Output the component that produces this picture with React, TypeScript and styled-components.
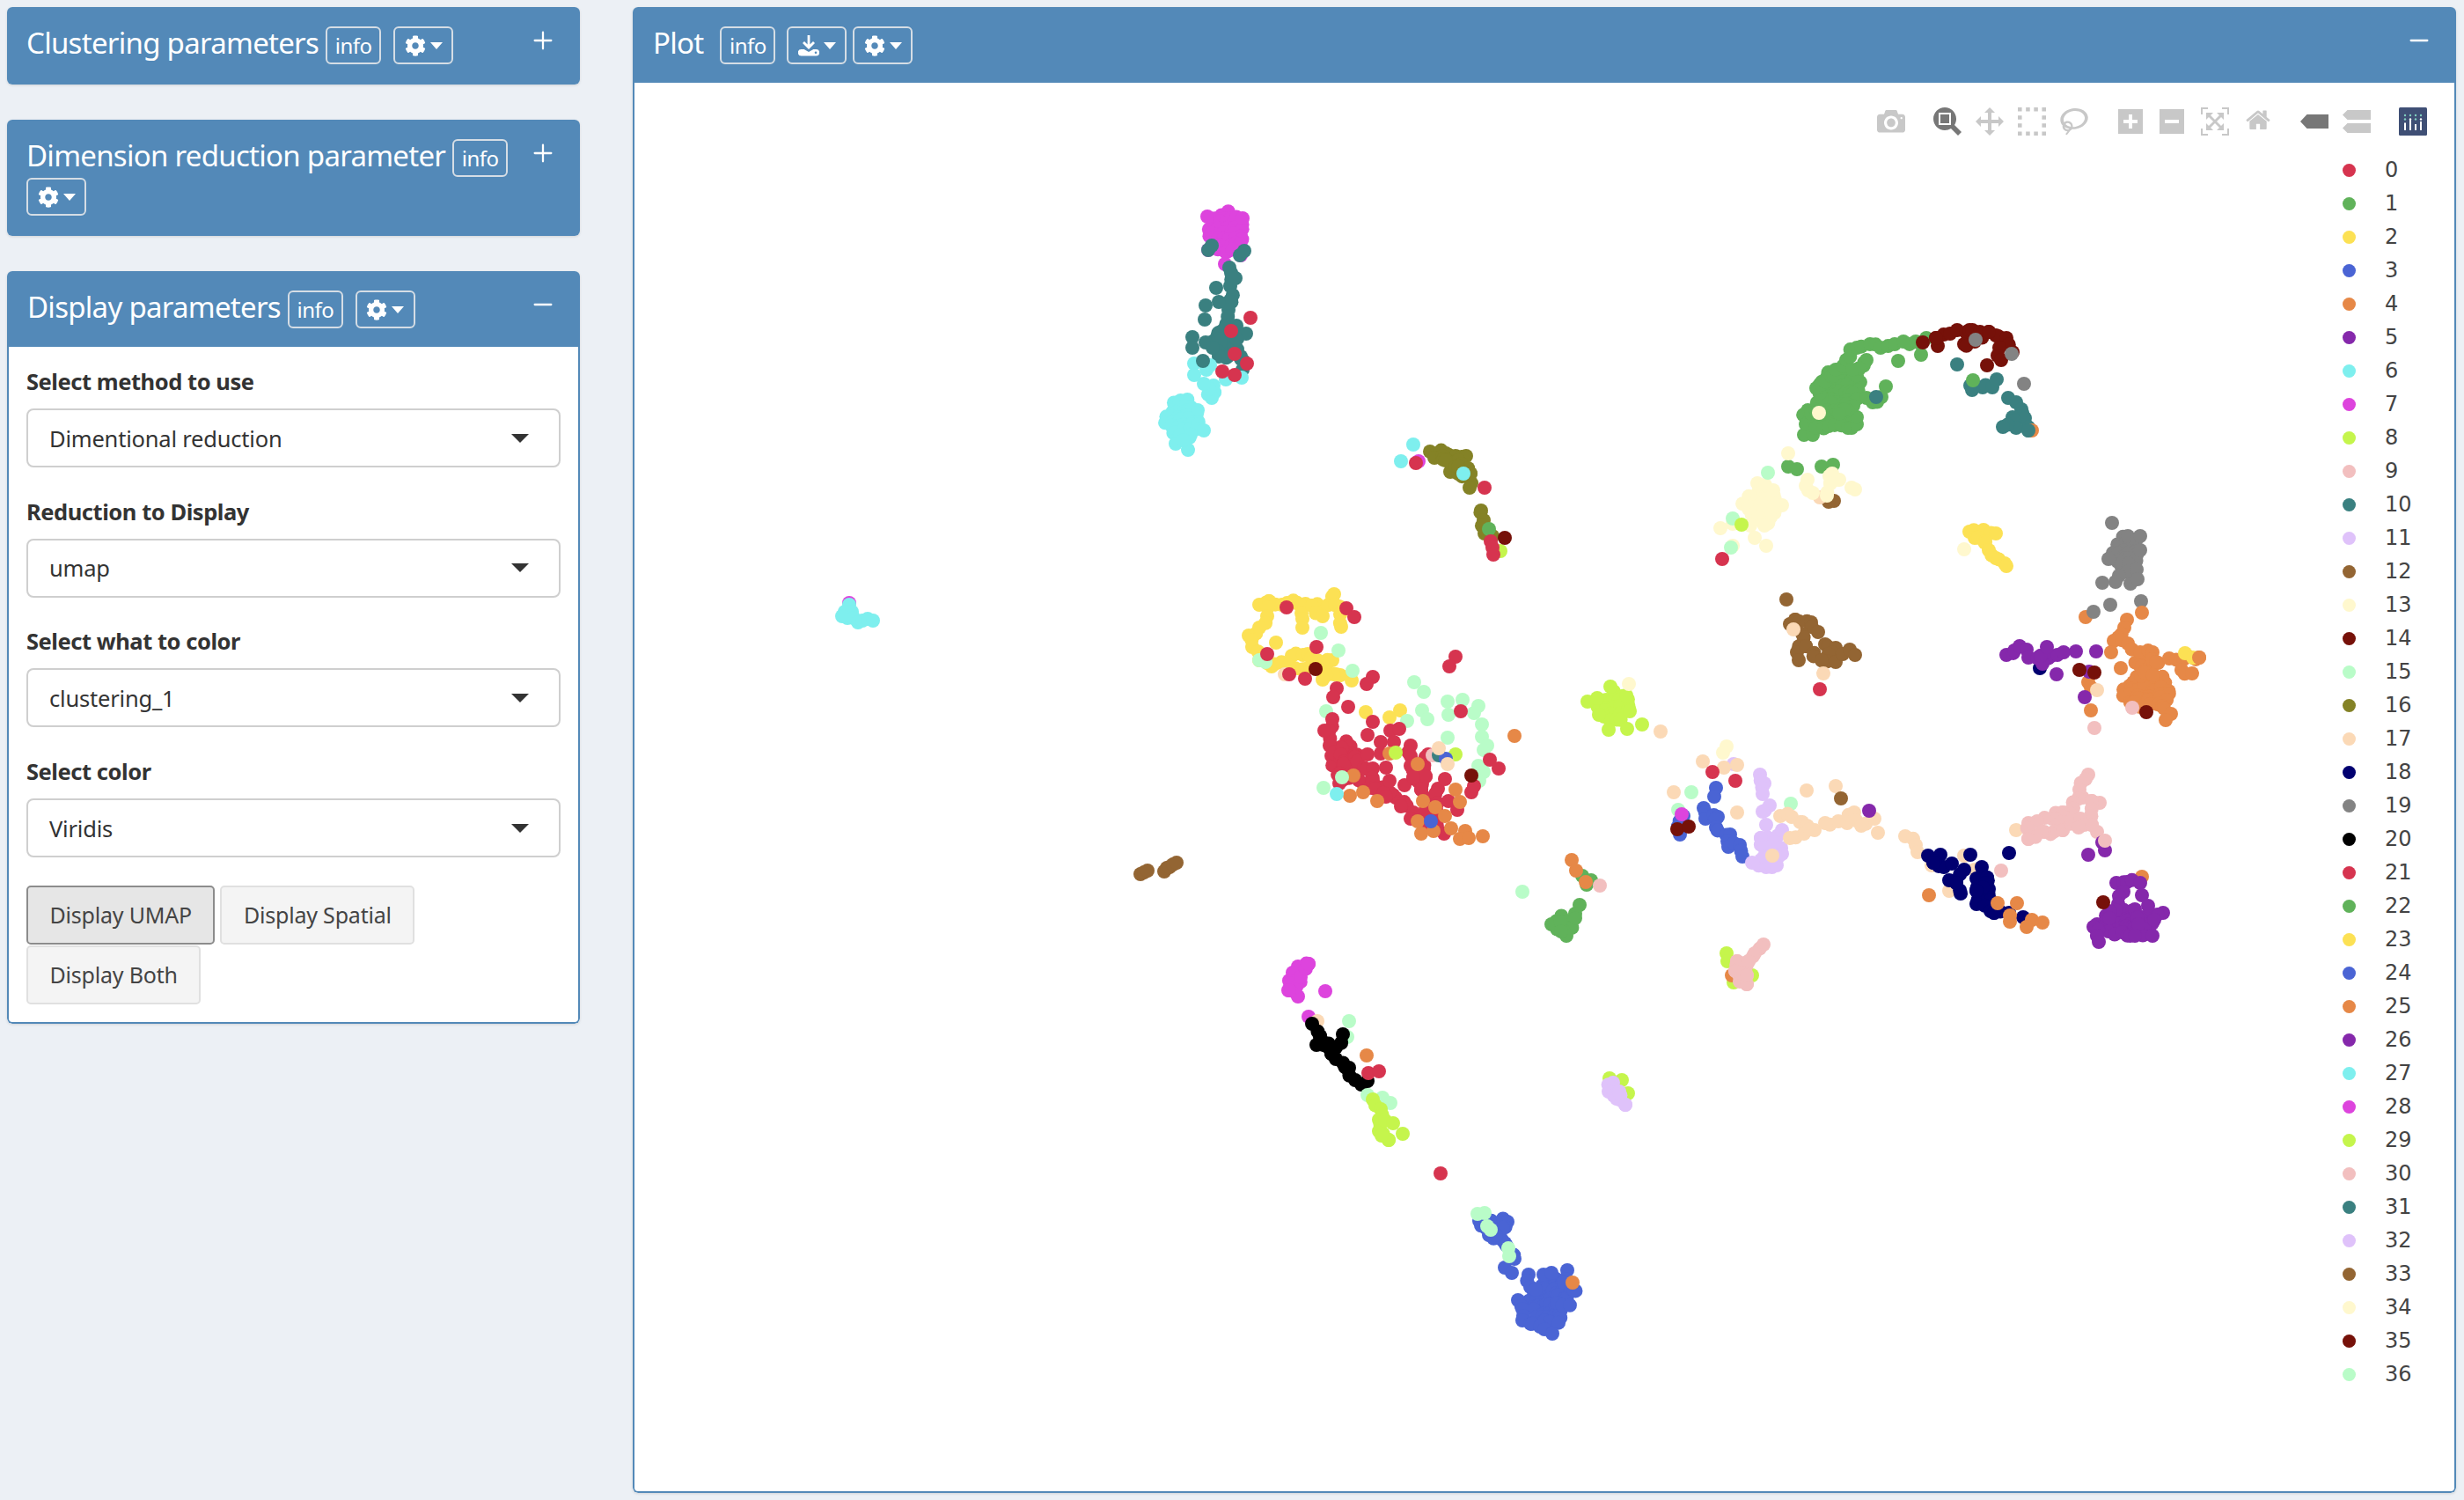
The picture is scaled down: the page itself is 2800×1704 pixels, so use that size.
import React from "react";
import styled, { createGlobalStyle } from "styled-components";
import { Plus, Minus } from "lucide-react";
import { FaCog } from "react-icons/fa";

const GlobalStyle = createGlobalStyle`
  html, body {
    margin: 0;
    background: #ecf0f5;
  }
  * {
    box-sizing: border-box;
  }
`;

const BLUE = "#5389b8";
const uiFont = `"Noto Sans", "Liberation Sans", sans-serif`;

const red = "#d6344f";
const green = "#60b25a";
const yellow = "#fce154";
const blue = "#4a64d4";
const orange = "#e68847";
const purple = "#8528ab";
const cyan = "#7eefee";
const magenta = "#dd44dd";
const lime = "#c5f54c";
const pink = "#f2bfbf";
const teal = "#3a8080";
const lavender = "#dfc2fa";
const brown = "#936533";
const cream = "#fff8ce";
const maroon = "#761109";
const mint = "#b9fcc8";
const olive = "#848226";
const peach = "#fbd9b6";
const navy = "#010070";
const gray = "#838383";
const black = "#000000";

const palette = [
  red, green, yellow, blue, orange, purple, cyan, magenta, lime, pink, teal,
  lavender, brown, cream, maroon, mint, olive, peach, navy, gray, black,
];
const legendItems = Array.from({ length: 37 }, (_, i) => ({
  name: String(i),
  color: i <= 20 ? palette[i] : palette[(i - 21) % 16],
}));

type Trace = { color: string; dots?: string; chains?: string[]; blobs?: number[][] };

// page coordinates, the svg viewBox below starts at the plot body's corner
const traces: Trace[] = [
  { color: magenta, blobs: [[1393, 265, 20, 23]], dots: "1372,246 1412,248 1373,284 1410,290 1392,300 1465,1125 1506,1126 965,685" , chains: ["1487,1095 1475,1098 1469,1105 1466,1117 1464,1125 1475,1132 1478,1110 1487,1095"] },
  { color: teal, chains: ["1397,304 1398,325 1396,352 1393,381 1395,405", "1385,385 1385,405", "1405,370 1405,400 1412,420", "1373,284 1377,279", "1409,290 1414,285", "2239,438 2241,443 2253,440 2264,440 2269,431", "2282,452 2291,457 2297,465 2301,475 2305,489", "2287,474 2291,486 2276,485"], dots: "1404,316 1382,327 1370,347 1369,363 1385,343 1355,383 1355,395 1370,389 1416,379 1405,385 1378,395 1410,405 2224,414" , blobs: [[1393, 388, 14, 18]] },
  { color: cyan, blobs: [[1345, 477, 20, 23]], chains: ["1379,438 1377,452 1368,436"], dots: "965,687 960,695 963,702 968,695 957,700 970,702 975,707 980,705 986,703 992,705 1357,413 1357,426 1371,420 1411,429 1393,431 1375,415 1368,489 1350,511 1336,504 1345,500" },
  { color: teal, dots: "1367,410" },
  { color: red, dots: "1421,361 1399,376 1403,402 1417,413 1389,422 1403,426" },

  { color: olive, chains: ["1625,513 1643,515 1654,518 1666,518", "1630,520 1661,527 1671,538 1670,554", "1648,536 1657,538 1671,538", "1640,522 1657,530", "1683,580 1686,591 1687,606 1696,609"] },
  { color: cyan, dots: "1663,538 1606,505 1592,524" },
  { color: magenta, dots: "1612,524" },
  { color: red, dots: "1609,526 1687,554" },
  { color: lime, dots: "1705,626" },
  { color: green, dots: "1692,601" },
  { color: red, chains: ["1694,615 1696,622 1697,630"] },
  { color: maroon, dots: "1710,611" },

  { color: yellow, chains: ["1431,687 1442,683 1474,685 1491,688 1503,690 1517,687 1516,675", "1517,687 1523,698 1524,712", "1474,685 1480,703 1480,713", "1491,688 1503,700", "1442,683 1440,700 1431,713 1419,722 1423,735 1431,750 1445,757 1465,755 1483,760 1503,753 1514,750", "1468,745 1486,743 1503,753 1508,763 1523,767 1503,772", "1536,773"], dots: "1450,730 1552,809 1579,815 1591,807" },
  { color: mint, dots: "1501,719 1521,739 1431,750 1438,752 1537,762 1607,775 1618,786 1645,797 1662,795 1680,802 1646,812 1675,810 1507,808 1616,807 1622,817 1599,819 1684,823 1645,838 1684,837 1690,847 1686,852 1680,870 1686,877 1681,887 1504,895 1525,883" },
  { color: peach, dots: "1460,766" },
  { color: red, chains: ["1514,817 1511,847 1526,867 1549,890 1583,903 1606,923 1641,947", "1525,850 1525,885", "1540,860 1560,887 1579,900", "1560,873 1560,895 1575,905", "1603,847 1603,870 1615,897 1620,920", "1620,882 1615,897", "1623,857 1620,882", "1634,896 1630,925", "1672,900 1675,893"], dots: "1462,690 1530,691 1539,701 1496,735 1440,743 1465,766 1483,771 1560,769 1553,777 1519,782 1515,792 1654,746 1647,757 1532,803 1660,808 1693,863 1703,873 1560,820 1554,835 1569,843 1580,830 1590,828 1584,843 1554,857 1569,856 1575,872 1579,887 1596,892 1606,883 1642,885 1646,910 1656,920 1592,916 1603,930 1505,830 1522,890", blobs: [[1528, 865, 16, 22]] },
  { color: maroon, dots: "1495,760 1672,881" },
  { color: orange, dots: "1721,836 1579,856 1611,868 1538,881 1549,900 1534,904 1565,910 1617,910 1654,897 1659,911 1631,917 1642,927 1611,933 1649,941 1615,947 1629,944 1665,944 1659,953 1669,952 1685,950" },
  { color: lime, dots: "1586,855 1654,857" },
  { color: pink, dots: "1628,858" },
  { color: teal, dots: "1635,858" },
  { color: blue, dots: "1643,862 1626,933" },
  { color: peach, dots: "1635,850 1645,868" },
  { color: cyan, dots: "1519,902" },
  { color: mint, dots: "1525,883 1730,1013" },

  { color: brown, dots: "1296,993 1300,991 1304,989 1323,990 1326,986 1329,985 1333,982 1337,980" },
  { color: green, blobs: [[1775, 1050, 13, 9]], dots: "1795,1028 1790,1038 1763,1050 1773,1047 1790,1043 1780,1063 1774,1058 1798,995 1808,1000 1803,1005" },
  { color: orange, dots: "1786,977 1791,989 1802,1002" },
  { color: pink, dots: "1818,1006" },

  { color: magenta, dots: "1487,1155" },
  { color: peach, dots: "1497,1160" },
  { color: mint, dots: "1533,1160 1531,1178" },
  { color: black, chains: ["1491,1163 1500,1177 1513,1197 1518,1203 1533,1213 1540,1227 1547,1232 1554,1228", "1496,1187 1518,1190 1526,1175", "1500,1177 1513,1197"] },
  { color: orange, dots: "1553,1199" },
  { color: red, dots: "1555,1219 1567,1217 1637,1333" },
  { color: mint, dots: "1554,1244 1571,1247 1580,1253" },
  { color: lime, chains: ["1560,1249 1569,1260 1567,1272 1567,1285 1578,1295", "1574,1273 1583,1276", "1578,1295 1570,1290"], dots: "1594,1288" },
  { color: lime, dots: "1829,1225 1843,1227 1850,1242" },
  { color: lavender, chains: ["1833,1230 1828,1240 1837,1248 1847,1255", "1840,1240 1847,1255"] },
  { color: blue, chains: ["1681,1387 1692,1403 1710,1412 1721,1430", "1690,1385 1713,1388 1700,1403", "1710,1440 1718,1446", "1737,1448 1739,1462 1745,1465", "1754,1448 1763,1446", "1781,1443 1777,1457 1788,1465", "1725,1477 1730,1487 1730,1500 1750,1507 1764,1515"], blobs: [[1760, 1480, 20, 26], [1776, 1470, 12, 14]] },
  { color: mint, chains: ["1679,1379 1687,1378", "1690,1393 1694,1397", "1714,1418 1715,1427"] },
  { color: orange, dots: "1787,1457" },

  { color: green, blobs: [[2090, 441, 24, 22], [2078, 472, 28, 12]], chains: ["2050,494 2060,494", "2052,482 2078,484 2100,486 2110,482 2110,474", "2058,470 2070,452 2064,441 2074,434 2086,420 2098,409 2110,395 2125,391 2137,395 2153,391 2163,388 2177,388 2189,384", "2110,427 2121,409 2105,420", "2121,452 2128,457 2138,451", "2106,461 2090,470"], dots: "2157,410 2183,403 2143,439 2242,432 2032,530 2042,533 2070,530 2083,528" },
  { color: teal, dots: "2132,451" },
  { color: cream, dots: "2067,469" },
  { color: maroon, chains: ["2200,384 2216,379 2224,375 2238,375 2250,377 2260,377 2268,381 2280,384 2287,400", "2202,393 2200,384", "2232,391 2244,388 2260,377", "2272,395 2270,404 2274,409"], dots: "2185,389 2258,415" },
  { color: gray, dots: "2245,386 2286,402 2300,436" },
  { color: orange, dots: "2309,489" },
  { color: teal, dots: "2305,489" },

  { color: brown, dots: "2084,569 2078,570" },
  { color: peach, dots: "2068,565" },
  { color: cream, blobs: [[2003, 574, 20, 18]], chains: ["1997,549 2003,552 2015,557", "2054,545 2052,552 2060,560", "2082,538 2080,549 2090,545", "2104,554 2108,556", "2080,549 2076,563"], dots: "2032,515 2025,574 1989,597 2005,597 1955,600 1969,595 1994,611 2007,620 1969,620" },
  { color: mint, dots: "2009,537 1969,589 1967,622" },
  { color: lime, dots: "1979,596" },
  { color: red, dots: "1957,635" },

  { color: cream, dots: "2232,624" },
  { color: yellow, chains: ["2238,604 2254,602 2268,606", "2244,611 2256,615 2260,625 2268,634 2278,640 2280,643"] },

  { color: gray, blobs: [[2416, 630, 13, 18]], chains: ["2418,609 2432,609", "2408,654 2404,661"], dots: "2400,594 2396,635 2432,625 2428,647 2389,662 2421,663 2429,658 2398,687 2433,683" },
  { color: orange, chains: ["2417,704 2414,713 2402,728 2418,731 2432,741 2446,741 2450,752", "2465,748 2481,749 2499,747", "2479,761 2491,765", "2373,775 2376,781"], dots: "2370,701 2434,696 2399,741 2410,759 2376,807", blobs: [[2440, 785, 26, 20], [2438, 755, 12, 14]] },
  { color: orange, chains: ["2457,802 2467,811 2461,818"] },
  { color: gray, dots: "2379,695" },
  { color: yellow, dots: "2483,742 2492,747" },
  { color: orange, dots: "2499,747" },
  { color: pink, dots: "2423,804 2380,827" },
  { color: navy, dots: "2318,759" },
  { color: purple, chains: ["2280,744 2295,734 2303,738 2305,747 2319,745 2331,745 2345,741", "2321,754 2319,745"], dots: "2326,735 2359,740 2382,740 2337,766 2374,763 2369,792" },
  { color: maroon, dots: "2439,809 2363,761 2380,764" },
  { color: peach, dots: "2383,784" },

  { color: brown, chains: ["2040,704 2034,709", "2040,704 2058,707 2066,718", "2048,720 2052,734 2042,741 2044,750", "2074,732 2086,736 2070,750 2086,752", "2052,734 2070,750", "2094,743 2102,738 2108,744"], dots: "2030,681" },
  { color: peach, dots: "2038,715 2072,765" },
  { color: red, dots: "2068,783" },

  { color: lime, blobs: [[1835, 803, 17, 17]], dots: "1804,797 1830,780 1815,793 1848,790 1852,808 1866,823 1828,829 1849,828 1817,812" },
  { color: cream, dots: "1851,777" },
  { color: peach, dots: "1887,831" },
  { color: cream, chains: ["1962,848 1958,855"] },
  { color: lavender, dots: "1970,868" },
  { color: peach, dots: "1935,865 1959,872 1974,869 1902,900 1974,923" },
  { color: red, dots: "1946,877 1972,887" },
  { color: mint, dots: "1922,900 2035,913 1907,920" },
  { color: blue, chains: ["1950,895 1948,905", "1936,918 1938,930 1952,928 1950,940 1966,948 1964,962 1977,960 1980,973", "1909,948 1913,927"] },
  { color: lavender, chains: ["2000,880 2005,890 2003,902", "2011,915 2003,922", "2001,952 2017,957 2025,943", "2017,957 2025,970 2005,973 1991,980 2007,985 2019,983", "2001,952 2005,973"], dots: "2007,937" },
  { color: magenta, dots: "1911,925" },
  { color: maroon, dots: "1906,942 1919,939" },
  { color: peach, chains: ["2023,927 2036,928 2048,934 2056,942 2062,943", "2034,952 2050,947 2056,942", "2074,935 2089,933 2099,935 2107,923 2115,938 2130,930", "2165,950 2177,960 2179,968"], dots: "2014,972 2053,898 2086,893 2134,946" },
  { color: brown, dots: "2092,907" },
  { color: purple, dots: "2124,921" },

  { color: peach, dots: "2232,972 2195,983 2215,1012 2244,988 2291,943" },
  { color: navy, chains: ["2191,972 2197,980 2209,985 2218,981", "2205,971 2197,980", "2215,1000 2223,1003 2228,1015", "2232,988 2223,1003", "2252,985 2258,997 2260,1010 2262,1023 2266,1037 2283,1037", "2246,998 2246,1012 2246,1027 2266,1037", "2258,997 2246,1012"], dots: "2239,971 2283,969 2299,1042" },
  { color: orange, dots: "2192,1017 2270,1026 2292,1026 2284,1047 2309,1045 2303,1053 2321,1048 2284,1040" },
  { color: pink, chains: ["2373,880 2370,885 2363,897 2362,907 2377,910 2386,912", "2362,907 2356,918 2344,923 2332,930 2315,933 2305,935 2305,953", "2377,910 2377,937 2383,945", "2344,923 2344,943 2323,945 2305,953", "2344,943 2364,930 2362,940 2377,937"], dots: "2274,989" },
  { color: purple, dots: "2389,957 2392,966 2373,971" },
  { color: pink, dots: "2392,955" },
  { color: orange, dots: "2434,996" },
  { color: purple, blobs: [[2415, 1050, 30, 14]], chains: ["2405,1003 2417,1002 2432,1003", "2413,1013 2407,1027 2397,1043", "2458,1037 2448,1045", "2379,1053 2385,1070", "2426,1033 2430,1050"], dots: "2434,1017 2441,1029 2426,1063 2446,1063" },
  { color: maroon, dots: "2390,1025" },
  { color: lime, chains: ["1962,1083 1963,1092"], dots: "1991,1108 1970,1116" },
  { color: orange, dots: "1968,1108" },
  { color: pink, chains: ["2004,1073 1994,1083 1987,1092 1985,1108 1985,1118", "1974,1092 1972,1103 1977,1115 1985,1118", "1974,1092 1987,1092", "1972,1103 1985,1108"] },
];

const parse = (s: string) => s.trim().split(/\s+/).map((p) => p.split(",").map(Number));

// little seeded jitter so the blobs don't come out as clean ellipses or tubes
let seed = 7;
const rnd = () => {
  seed = (seed * 16807) % 2147483647;
  return seed / 2147483647 - 0.5;
};

const tracePoints = (t: Trace) => {
  const pts: number[][] = [];
  (t.blobs || []).forEach(([x, y, rx, ry]) => {
    for (let dy = -ry; dy <= ry; dy += 6) {
      for (let dx = -rx; dx <= rx; dx += 6) {
        if ((dx * dx) / (rx * rx) + (dy * dy) / (ry * ry) <= 1.05) {
          pts.push([x + dx + rnd() * 6, y + dy + rnd() * 6]);
        }
      }
    }
  });
  (t.chains || []).forEach((c) => {
    const list = parse(c);
    list.forEach((p, i) => {
      const q = list[i + 1];
      if (!q) {
        pts.push(p);
        return;
      }
      const len = Math.hypot(q[0] - p[0], q[1] - p[1]);
      const steps = Math.max(1, Math.round(len / 7));
      for (let k = 0; k < steps; k++) {
        const wobble = k === 0 ? 0 : 7;
        pts.push([
          p[0] + ((q[0] - p[0]) * k) / steps + rnd() * wobble,
          p[1] + ((q[1] - p[1]) * k) / steps + rnd() * wobble,
        ]);
      }
    });
  });
  if (t.dots) pts.push(...parse(t.dots));
  return pts;
};

const Page = styled.div`
  display: flex;
  gap: 60px;
  height: 1704px;
  padding: 8px 9px 8px 8px;
  background: #ecf0f5;
  font-family: ${uiFont};
`;

const SideColumn = styled.div`
  display: flex;
  flex-direction: column;
  gap: 40px;
  width: 651px;
  flex: none;
`;

const Card = styled.section<{ $fill?: boolean }>`
  display: flex;
  flex-direction: column;
  border-radius: 6px;
  background: #fff;
  box-shadow: 0 1px 3px rgba(0, 0, 0, 0.12);
  overflow: hidden;
  ${(p) => p.$fill && "flex: 1; min-width: 0;"}
`;

const Header = styled.header<{ $bar?: boolean }>`
  display: flex;
  align-items: flex-start;
  justify-content: space-between;
  padding: ${(p) => (p.$bar ? "22px 26px 20px 23px" : "22px 26px 22px 22px")};
  background: ${BLUE};
  color: #fff;
`;

const HeaderMain = styled.div`
  display: flex;
  flex-wrap: wrap;
  align-items: center;
  flex: 1;
  min-width: 0;
  max-width: 570px;
`;

const PlotHeaderMain = styled(HeaderMain)`
  max-width: none;
`;

const Title = styled.h3`
  margin: -6px 8px 0 0;
  font-size: 33px;
  font-weight: 400;
  letter-spacing: -0.72px;
  line-height: 44px;
  white-space: nowrap;
`;

const PlotTitle = styled(Title)`
  margin-right: 19px;
`;

const HeaderButton = styled.button<{ $gap?: number }>`
  display: inline-flex;
  align-items: center;
  justify-content: center;
  gap: 5px;
  height: 43px;
  margin: 0 ${(p) => p.$gap ?? 0}px 1px 0;
  padding: 0;
  border: 2px solid rgba(236, 236, 236, 0.85);
  border-radius: 6px;
  background: transparent;
  color: #fff;
  font-family: ${uiFont};
  font-size: 24px;
  letter-spacing: -0.5px;
`;

const InfoButton = styled(HeaderButton)`
  width: 63px;
`;

const MenuButton = styled(HeaderButton)`
  width: 68px;
`;

const Caret = styled.span<{ $dark?: boolean; $wide?: boolean }>`
  display: inline-block;
  width: 0;
  height: 0;
  border-left: ${(p) => (p.$wide ? 10 : 7.5)}px solid transparent;
  border-right: ${(p) => (p.$wide ? 10 : 7.5)}px solid transparent;
  border-top: ${(p) => (p.$wide ? 10 : 8)}px solid ${(p) => (p.$dark ? "#333" : "#fff")};
`;

const CollapseIcon = styled.span`
  display: flex;
  flex: none;
  width: 32px;
  height: 32px;
  color: #fff;
`;

const FormBody = styled.div`
  padding: 21px 20px 20px 20px;
  border: solid ${BLUE};
  border-width: 0 2px 2px;
  border-radius: 0 0 6px 6px;
`;

const Field = styled.div`
  margin-bottom: 31.7px;
`;

const FieldLabel = styled.label`
  display: block;
  height: 36px;
  margin-bottom: 13px;
  color: #333;
  font-size: 25.5px;
  font-weight: 700;
  letter-spacing: -0.45px;
  line-height: 36px;
`;

const SelectBox = styled.div`
  display: flex;
  align-items: center;
  justify-content: space-between;
  height: 67px;
  padding: 0 34px 0 24px;
  border: 2px solid #cfcfcf;
  border-radius: 8px;
  background: #fff;
  color: #333;
  font-size: 25.5px;
  letter-spacing: -0.2px;
`;

const ButtonRow = styled.div`
  display: flex;
  flex-wrap: wrap;
  gap: 1px 6px;
`;

const ActionButton = styled.button<{ $active?: boolean }>`
  height: 67px;
  padding: 0 24.5px;
  border: 2px solid ${(p) => (p.$active ? "#8c8c8c" : "#e0e0e0")};
  border-radius: 5px;
  background: ${(p) => (p.$active ? "#e6e6e6" : "#f4f4f4")};
  color: #444;
  font-family: ${uiFont};
  font-size: 25px;
  letter-spacing: -0.2px;
`;

const PlotArea = styled.div`
  position: relative;
  flex: 1;
  border: solid ${BLUE};
  border-width: 0 2px 2px;
  border-radius: 0 0 6px 6px;
  background: #fff;
`;

const ScatterSvg = styled.svg`
  display: block;
  width: 100%;
  height: 100%;
`;

const ModeBar = styled.div`
  position: absolute;
  top: 28px;
  right: 31px;
  display: flex;
  align-items: center;
`;

const ModeGroup = styled.div<{ $gap: number; $inner?: number }>`
  display: flex;
  align-items: center;
  gap: ${(p) => p.$inner ?? 16}px;
  margin-right: ${(p) => p.$gap}px;
`;

const ModeIcon = styled.svg<{ $w: number; $h: number; $on?: boolean }>`
  display: block;
  width: ${(p) => p.$w}px;
  height: ${(p) => p.$h}px;
  fill: ${(p) => (p.$on ? "#777" : "#c8c8c8")};
`;

const Legend = styled.ul`
  position: absolute;
  top: 80px;
  left: 1941px;
  display: flex;
  flex-direction: column;
  margin: 0;
  padding: 0;
  list-style: none;
`;

const LegendRow = styled.li`
  display: flex;
  align-items: center;
  height: 38px;
  color: #444;
  font-family: "DejaVu Sans", sans-serif;
  font-size: 24px;
`;

const LegendDot = styled.span<{ $color: string }>`
  width: 15px;
  height: 15px;
  margin-right: 33px;
  border-radius: 50%;
  background: ${(p) => p.$color};
`;

const flip = "matrix(1 0 0 -1 0 850)";

const modeIcons = [
  [
    { w: 32, h: 26, vb: "0 0 1000 812", d: "m500 450c-83 0-150-67-150-150 0-83 67-150 150-150 83 0 150 67 150 150 0 83-67 150-150 150z m400 150h-120c-16 0-34 13-39 29l-31 93c-6 15-23 28-40 28h-340c-16 0-34-13-39-28l-31-94c-6-15-23-28-40-28h-120c-55 0-100-45-100-100v-450c0-55 45-100 100-100h800c55 0 100 45 100 100v450c0 55-45 100-100 100z m-400-550c-138 0-250 112-250 250 0 138 112 250 250 250 138 0 250-112 250-250 0-138-112-250-250-250z m365 380c-19 0-35 16-35 35 0 19 16 35 35 35 19 0 35-16 35-35 0-19-16-35-35-35z", t: "matrix(1 0 0 -1 0 750)" },
  ],
  [
    { w: 32, h: 32, vb: "0 0 1000 1000", on: true, d: "m1000-25l-250 251c40 63 63 138 63 218 0 224-182 406-407 406-224 0-406-182-406-406s183-406 407-406c80 0 155 22 218 62l250-250 125 125z m-812 250l0 438 437 0 0-438-437 0z m62 375l313 0 0-312-313 0 0 312z", t: flip },
    { w: 32, h: 32, vb: "0 0 1000 1000", d: "m1000 350l-187 188 0-125-250 0 0 250 125 0-188 187-187-187 125 0 0-250-250 0 0 125-188-188 186-187 0 125 252 0 0-250-125 0 187-188 188 188-125 0 0 250 250 0 0-126 187 188z", t: flip },
    { w: 32, h: 32, vb: "0 0 1000 1000", d: "M0 850l0 143 143 0 0-143-143 0z m286 0l0 143 143 0 0-143-143 0z m285 0l0 143 143 0 0-143-143 0z m286 0l0 143 143 0 0-143-143 0z m-857-286l0 143 143 0 0-143-143 0z m857 0l0 143 143 0 0-143-143 0z m-857-285l0 143 143 0 0-143-143 0z m857 0l0 143 143 0 0-143-143 0z m-857-286l0 143 143 0 0-143-143 0z m286 0l0 143 143 0 0-143-143 0z m285 0l0 143 143 0 0-143-143 0z m286 0l0 143 143 0 0-143-143 0z", t: "matrix(1 0 0 -1 0 993)" },
    { w: 32, h: 32, vb: "0 0 1031 1000", d: "m1018 538c-36 207-290 336-568 286-277-48-473-256-436-463 10-57 36-108 76-151-13-66 11-137 68-183 34-28 75-41 114-42l-55-70 0 0c-2-1-3-2-4-3-10-14-8-34 5-45 14-11 34-8 45 4 1 1 2 3 2 5l0 0 113 140c16 11 31 24 45 40 4 3 6 7 8 11 48-3 100 0 151 9 278 48 473 255 436 462z m-624-379c-80 14-149 48-197 96 42 42 109 47 156 9 33-26 47-66 41-105z m-187-74c-19 16-33 37-39 60 50-32 109-55 174-68-42-25-95-24-135 8z m360 75c-34-7-69-9-102-8 8 62-16 128-68 170-73 59-175 54-244-5-9 20-16 40-20 61-28 159 121 317 333 354s407-60 434-217c28-159-121-318-333-355z", t: flip },
  ],
  [
    { w: 28, h: 28, vb: "0 0 875 875", d: "m1 787l0-875 875 0 0 875-875 0z m687-500l-187 0 0-187-125 0 0 187-188 0 0 125 188 0 0 187 125 0 0-187 187 0 0-125z", t: "matrix(1 0 0 -1 0 787)" },
    { w: 28, h: 28, vb: "0 0 875 875", d: "m0 788l0-876 875 0 0 876-875 0z m688-500l-500 0 0 125 500 0 0-125z", t: "matrix(1 0 0 -1 0 787)" },
    { w: 32, h: 32, vb: "0 0 1000 1000", d: "m250 850l-187 0-63 0 0-62 0-188 63 0 0 188 187 0 0 62z m688 0l-188 0 0-62 188 0 0-188 62 0 0 188 0 62-62 0z m-875-938l0 188-63 0 0-188 0-62 63 0 187 0 0 62-187 0z m875 188l0-188-188 0 0-62 188 0 62 0 0 62 0 188-62 0z m-125 188l-1 0-93-94-156 156 156 156 92-93 2 0 0 250-250 0 0-2 93-92-156-156-156 156 94 92 0 2-250 0 0-250 0 0 93 93 157-156-157-156-93 94 0 0 0-250 250 0 0 0-94 93 156 157 156-157-93-93 0 0 250 0 0 250z", t: flip },
    { w: 28, h: 28, vb: "0 0 929 929", d: "m786 296v-267q0-15-11-26t-25-10h-214v214h-143v-214h-214q-15 0-25 10t-11 26v267q0 1 0 2t0 2l321 264 321-264q1-1 1-4z m124 39l-34-41q-5-5-12-6h-2q-7 0-12 3l-386 322-386-322q-7-4-13-4-7 2-12 7l-35 41q-4 5-3 13t6 12l401 334q18 15 42 15t43-15l136-114v109q0 8 5 13t13 5h107q8 0 13-5t5-13v-227l122-102q5-5 6-12t-4-13z", t: "matrix(1 0 0 -1 0 760)" },
  ],
];

const DownloadIcon = () => (
  <svg width="24" height="24" viewBox="0 0 24 24" fill="#fff">
    <path d="M10.6 0h2.8v10.5l3.6-3.6 2 2-7 7-7-7 2-2 3.6 3.6z" />
    <path d="M3.5 16h3.2l5.3 3 5.3-3h3.2a3.5 3.5 0 0 1 0 7.4H3.5a3.5 3.5 0 0 1 0-7.4zM20 18.4a1.3 1.3 0 1 0 0 2.6 1.3 1.3 0 0 0 0-2.6z" fillRule="evenodd" />
  </svg>
);

const PlotlyMark = () => (
  <svg width="32" height="32" viewBox="0 0 32 32">
    <rect width="32" height="32" rx="1.5" fill="#3f4f75" />
    {[7, 13, 19, 25].map((x) => (
      <g key={x}>
        <circle cx={x} cy="9" r="1.2" fill="#80cfbe" />
        <circle cx={x} cy="13.5" r="1.2" fill={x === 7 || x === 19 ? "#80cfbe" : "#fff"} />
      </g>
    ))}
    <path d="M6 17.5h2v8.5H6zM12 13h2v13h-2zM18 19h2v7h-2zM24 16h2v10h-2z" fill="#fff" />
  </svg>
);

const SpikeClosest = () => (
  <ModeIcon $w={32} $h={16} $on viewBox="0 0 32 16">
    <path d="M0 8 7.5 0H32v16H7.5z" />
  </ModeIcon>
);

const SpikeCompare = () => (
  <ModeIcon $w={32} $h={26} viewBox="0 0 32 26">
    <path d="M0 5.5 5.5 0H32v11H5.5zM0 20.5 5.5 15H32v11H5.5z" />
  </ModeIcon>
);

const CardHeader = ({ title, open }: { title: string; open?: boolean }) => (
  <Header $bar={open}>
    <HeaderMain>
      <Title>{title}</Title>
      <InfoButton $gap={14}>info</InfoButton>
      <MenuButton>
        <FaCog size={24} />
        <Caret />
      </MenuButton>
    </HeaderMain>
    <CollapseIcon>{open ? <Minus size={32} strokeWidth={1.7} /> : <Plus size={32} strokeWidth={1.7} />}</CollapseIcon>
  </Header>
);

const fields = [
  { label: "Select method to use", value: "Dimentional reduction" },
  { label: "Reduction to Display", value: "umap" },
  { label: "Select what to color", value: "clustering_1" },
  { label: "Select color", value: "Viridis" },
];

const App = () => {
  const drawn = React.useMemo(() => traces.map((t) => ({ color: t.color, pts: tracePoints(t) })), []);

  return (
    <>
      <GlobalStyle />
      <Page>
        <SideColumn>
          <Card>
            <CardHeader title="Clustering parameters" />
          </Card>
          <Card>
            <CardHeader title="Dimension reduction parameter" />
          </Card>
          <Card>
            <CardHeader title="Display parameters" open />
            <FormBody>
              {fields.map((f) => (
                <Field key={f.label}>
                  <FieldLabel>{f.label}</FieldLabel>
                  <SelectBox>
                    {f.value}
                    <Caret $dark $wide />
                  </SelectBox>
                </Field>
              ))}
              <ButtonRow>
                <ActionButton $active>Display UMAP</ActionButton>
                <ActionButton>Display Spatial</ActionButton>
                <ActionButton>Display Both</ActionButton>
              </ButtonRow>
            </FormBody>
          </Card>
        </SideColumn>

        <Card $fill>
          <Header $bar>
            <PlotHeaderMain>
              <PlotTitle>Plot</PlotTitle>
              <InfoButton $gap={13}>info</InfoButton>
              <MenuButton $gap={7}>
                <DownloadIcon />
                <Caret />
              </MenuButton>
              <MenuButton>
                <FaCog size={24} />
                <Caret />
              </MenuButton>
            </PlotHeaderMain>
            <CollapseIcon>
              <Minus size={32} strokeWidth={1.7} />
            </CollapseIcon>
          </Header>
          <PlotArea>
            <ScatterSvg viewBox="721 94 2068 1600" preserveAspectRatio="xMinYMin">
              {drawn.map((t, i) => (
                <g key={i} fill={t.color}>
                  {t.pts.map((p, j) => (
                    <circle key={j} cx={p[0]} cy={p[1]} r="8" />
                  ))}
                </g>
              ))}
            </ScatterSvg>
            <ModeBar>
              {modeIcons.map((group, i) => (
                <ModeGroup key={i} $gap={i === 0 ? 32 : 34} $inner={i === 2 ? 19 : 16}>
                  {group.map((icon) => (
                    <ModeIcon key={icon.d.slice(0, 20)} $w={icon.w} $h={icon.h} $on={"on" in icon} viewBox={icon.vb}>
                      <path d={icon.d} transform={icon.t} />
                    </ModeIcon>
                  ))}
                </ModeGroup>
              ))}
              <ModeGroup $gap={32}>
                <SpikeClosest />
                <SpikeCompare />
              </ModeGroup>
              <PlotlyMark />
            </ModeBar>
            <Legend>
              {legendItems.map((item) => (
                <LegendRow key={item.name}>
                  <LegendDot $color={item.color} />
                  {item.name}
                </LegendRow>
              ))}
            </Legend>
          </PlotArea>
        </Card>
      </Page>
    </>
  );
};

export default App;
